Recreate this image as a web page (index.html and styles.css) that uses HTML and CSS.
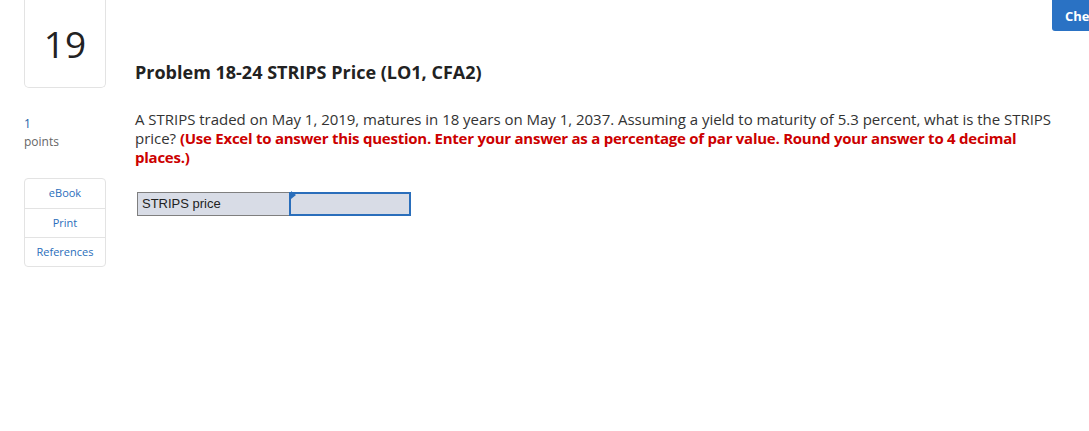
FILE: index.html
```html
<!DOCTYPE html>
<html lang="en">
<head>
    <meta charset="UTF-8">
    <title>Problem 18-24 STRIPS Price</title>
    <link rel="stylesheet" href="styles.css">
</head>
<body>
    <button class="check-btn">Check my work</button>
    <div class="page">
        <div class="sidebar">
            <div class="qnum">19</div>
            <div class="points">
                <div class="points-value">1</div>
                <div class="points-label">points</div>
            </div>
            <div class="resources">
                <a class="resource" href="#">eBook</a>
                <a class="resource" href="#">Print</a>
                <a class="resource" href="#">References</a>
            </div>
        </div>
        <div class="question">
            <h1 class="title">Problem 18-24 STRIPS Price (LO1, CFA2)</h1>
            <p class="prompt">A STRIPS traded on May 1, 2019, matures in 18 years on May 1, 2037. Assuming a yield to maturity of 5.3 percent, what is the STRIPS price? <strong class="note">(Use Excel to answer this question. Enter your answer as a percentage of par value. Round your answer to 4 decimal places.)</strong></p>
            <div class="answer-row">
                <div class="answer-label">STRIPS price</div>
                <div class="answer-cell"><span class="cell-flag"></span></div>
            </div>
        </div>
    </div>
</body>
</html>
```

FILE: styles.css
```css
body {
    margin: 0;
    background-color: #fff;
    font-family: 'Open Sans', 'Liberation Sans', sans-serif;
    color: #333;
    position: relative;
    overflow: hidden;
}

.check-btn {
    position: absolute;
    top: 0;
    left: 1052px;
    width: 140px;
    height: 31px;
    padding: 0 0 0 13px;
    text-align: left;
    white-space: nowrap;
    background-color: #2a72c4;
    color: #fff;
    border: none;
    border-radius: 0 0 0 3px;
    font-family: 'Open Sans', 'Liberation Sans', sans-serif;
    font-weight: bold;
    font-size: 13px;
}

.page {
    display: flex;
    padding-left: 24px;
}

.sidebar {
    width: 82px;
    flex-shrink: 0;
}

.qnum {
    height: 93px;
    margin-top: -5px;
    box-sizing: border-box;
    border: 1px solid #e3e3e3;
    border-top: none;
    border-radius: 0 0 5px 5px;
    display: flex;
    justify-content: center;
    align-items: center;
    padding-top: 4px;
    font-size: 37px;
    color: #222;
}

.points {
    margin-top: 27px;
    line-height: 18px;
}

.points-value {
    color: #1b5fa8;
    font-size: 12px;
}

.points-label {
    color: #666;
    font-size: 12px;
}

.resources {
    margin-top: 27px;
    border: 1px solid #e3e3e3;
    border-radius: 4px;
    display: flex;
    flex-direction: column;
}

.resource {
    display: block;
    text-align: center;
    text-decoration: none;
    color: #2a6ebb;
    font-size: 11px;
    height: 28px;
    line-height: 28px;
    border-top: 1px solid #e3e3e3;
}

.resource:first-child {
    border-top: none;
    height: 29px;
}

.question {
    margin-left: 29px;
    width: 930px;
}

.title {
    margin: 59px 0 0;
    font-size: 18px;
    font-weight: bold;
    color: #222;
    line-height: 26px;
}

.prompt {
    margin: 25px 0 0;
    font-size: 15px;
    line-height: 19px;
    color: #333;
    letter-spacing: -0.02px;
}

.note {
    color: #c00;
    letter-spacing: -0.25px;
}

.answer-row {
    display: flex;
    margin-top: 25px;
    margin-left: 2px;
    height: 24px;
}

.answer-label {
    width: 152px;
    box-sizing: border-box;
    border: 1px solid #7f7f7f;
    border-right: none;
    background-color: #d8dce6;
    font-family: 'Liberation Sans', Arial, sans-serif;
    font-size: 13px;
    line-height: 22px;
    padding-left: 4px;
    color: #222;
}

.answer-cell {
    width: 122px;
    box-sizing: border-box;
    border: 2px solid #2a6ebb;
    background-color: #d8dce6;
    position: relative;
}

.cell-flag {
    position: absolute;
    left: 0;
    top: -3px;
    border-top: 4px solid transparent;
    border-bottom: 4px solid transparent;
    border-left: 5px solid #2a6ebb;
}
```
